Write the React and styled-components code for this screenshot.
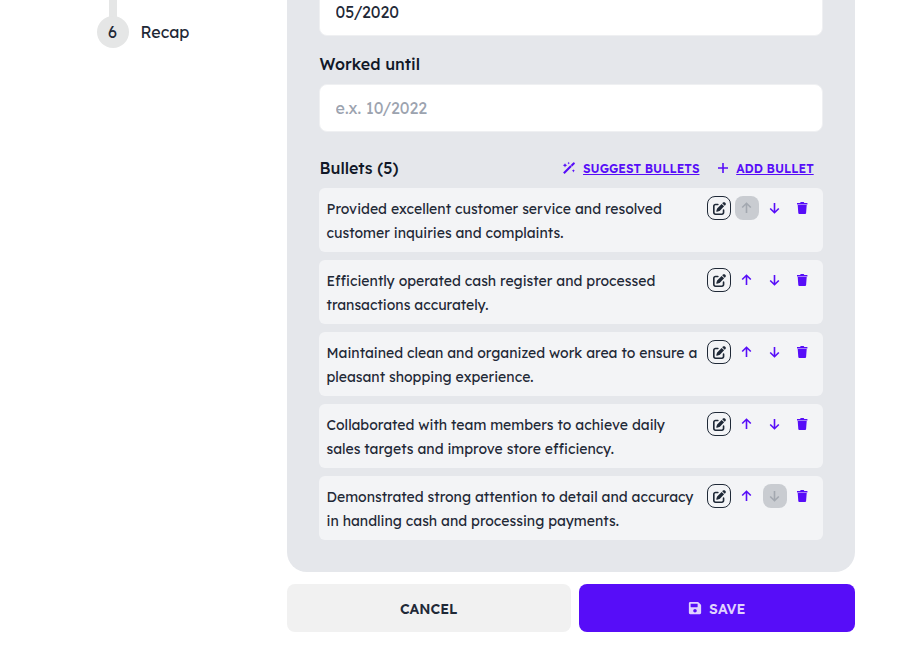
import React from "react";
import styled, { createGlobalStyle, css } from "styled-components";
import { FaSave } from "react-icons/fa";
import { FaPenToSquare } from "react-icons/fa6";

const GlobalStyle = createGlobalStyle`
  * { box-sizing: border-box; }
  body {
    margin: 0;
    height: 654px;
    overflow: hidden;
    background: #fff;
    color: #1f2937;
    font-family: Lexend, Inter, sans-serif;
    font-size: 16px;
    line-height: 24px;
  }
  button, input { font: inherit; }
`;

const Page = styled.div`
  display: flex;
  align-items: flex-start;
  height: 654px;
  overflow: hidden;
`;

const Steps = styled.aside`
  width: 287px;
  padding-left: 97px;
`;

const StepLine = styled.div`
  width: 8px;
  height: 18px;
  margin: 0 0 -2px 12px;
  background: #e5e6e6;
`;

const Step = styled.div`
  display: flex;
  align-items: center;
  gap: 11.5px;
`;

const StepNumber = styled.span`
  display: grid;
  place-items: center;
  width: 32px;
  height: 32px;
  padding-right: 1px;
  border-radius: 50%;
  background: #e5e6e6;
`;

const Main = styled.main`
  width: 568px;
`;

const Panel = styled.section`
  height: 572px;
  padding: 0 32px;
  border-radius: 0 0 20px 20px;
  background: #e5e7eb;
  overflow: hidden;
`;

const Input = styled.input`
  display: block;
  width: 504px;
  height: 48px;
  margin-top: ${(p) => p.$top}px;
  padding: 0 15.5px;
  border: 1px solid #eff0f2;
  border-radius: 8px;
  background: #fff;
  color: #1f2937;
  outline: none;
  &::placeholder { color: #9ca3af; opacity: 1; }
`;

const Label = styled.label`
  display: block;
  margin: 16px 0 8px 0.5px;
  color: #111827;
  font-weight: 500;
`;

const BulletsHeader = styled.div`
  display: flex;
  align-items: center;
  height: 24px;
  margin: 24px 0 8px 0.5px;
`;

const Title = styled.h3`
  margin: 0 auto 0 0;
  color: #111827;
  font-size: 16px;
  font-weight: 500;
`;

const LinkButton = styled.button`
  display: flex;
  align-items: center;
  gap: ${(p) => p.$gap}px;
  margin-right: ${(p) => p.$end}px;
  padding: 0;
  border: 0;
  background: none;
  color: #570df8;
  font-size: 12px;
  font-weight: 600;
  line-height: 12px;
  text-transform: uppercase;
`;

const LinkText = styled.span`
  padding-top: 2px;
  text-decoration: underline;
`;

const BulletList = styled.ul`
  display: grid;
  gap: 8px;
  margin: 0;
  padding: 0;
  list-style: none;
`;

const Bullet = styled.li`
  display: flex;
  justify-content: space-between;
  height: 64px;
  padding: 8px 8px 8px 7.5px;
  border-radius: 6px;
  background: #f3f4f6;
`;

const BulletText = styled.p`
  margin: 0;
  padding-top: 1px;
  width: 376px;
  font-size: 14px;
  line-height: 24px;
`;

const Actions = styled.div`
  display: flex;
  gap: 4px;
`;

const IconButton = styled.button`
  display: grid;
  place-items: center;
  width: 24px;
  height: 24px;
  padding: 0;
  border: 1px solid transparent;
  border-radius: 8px;
  background: none;
  color: #570df8;
  ${(p) => p.$outlined && css`border-color: #1f2937; color: #1f2937;`}
  &:disabled { background: #c9ccd1; color: #a3a8b0; }
`;

const Footer = styled.footer`
  display: flex;
  gap: 8px;
  margin-top: 12px;
`;

const FooterButton = styled.button`
  display: flex;
  align-items: center;
  justify-content: center;
  gap: 7px;
  width: ${(p) => (p.$primary ? 276 : 284)}px;
  height: 48px;
  padding: 2px 0.5px 0 0;
  border: 0;
  border-radius: 8px;
  background: ${(p) => (p.$primary ? "#570df8" : "#f1f1f1")};
  color: ${(p) => (p.$primary ? "#e0d2fe" : "#1f2937")};
  font-size: 14px;
  font-weight: 600;
  line-height: 14px;
  text-transform: uppercase;
  svg { margin-top: -2px; }
`;

const StrokeIcon = styled.svg.attrs({ fill: "none", stroke: "currentColor" })`
  display: block;
  stroke-width: 1.6;
`;

const ArrowIcon = ({ down }) => (
  <StrokeIcon width="14" height="14" viewBox="0 0 14 14">
    <path d={down ? "M6.5 2v9.5M2.2 7.5l4.3 4.2 4.3-4.2" : "M6.5 12V2.5M2.2 6.5l4.3-4.2 4.3 4.2"} />
  </StrokeIcon>
);

const TrashIcon = () => (
  <svg width="14" height="14" viewBox="0 0 14 14" fill="currentColor">
    <path d="M1 2h3.1l.6-.9h3l.6.9h3.1v1.4H1zM1.7 4h9l-.6 8.1a1 1 0 0 1-1 .9H3.3a1 1 0 0 1-1-.9z" />
  </svg>
);

const PlusIcon = () => (
  <StrokeIcon width="16" height="16" viewBox="0 0 16 16">
    <path d="M8 3v10M3 8h10" />
  </StrokeIcon>
);

const WandIcon = () => (
  <svg width="14" height="14" viewBox="0 0 14 14" fill="currentColor">
    <path d="M1.1 11.5L8.3 4.3l1.5 1.5L2.6 13zM8.7 3.9l2.5-2.5a.7.7 0 0 1 1 0l.5.5a.7.7 0 0 1 0 1l-2.5 2.5z" />
    <path d="M3 2.2l.7 1.4 1.5.7-1.5.7L3 6.4 2.3 5 .8 4.3l1.5-.7zM6.7.8l.4.9.9.4-.9.4-.4.9-.4-.9-.9-.4.9-.4zM11.4 8.2l.5 1.1 1.1.5-1.1.5-.5 1.1-.5-1.1-1.1-.5 1.1-.5z" />
  </svg>
);

const bullets = [
  "Provided excellent customer service and resolved customer inquiries and complaints.",
  "Efficiently operated cash register and processed transactions accurately.",
  "Maintained clean and organized work area to ensure a pleasant shopping experience.",
  "Collaborated with team members to achieve daily sales targets and improve store efficiency.",
  "Demonstrated strong attention to detail and accuracy in handling cash and processing payments.",
];

export default function App() {
  return (
    <>
      <GlobalStyle />
      <Page>
        <Steps>
          <StepLine />
          <Step>
            <StepNumber>6</StepNumber>
            Recap
          </Step>
        </Steps>
        <Main>
          <Panel>
            <Input $top={-12} defaultValue="05/2020" />
            <Label htmlFor="until">Worked until</Label>
            <Input $top={0} id="until" placeholder="e.x. 10/2022" />
            <BulletsHeader>
              <Title>Bullets (5)</Title>
              <LinkButton $gap={7} $end={15.7}>
                <WandIcon />
                <LinkText>Suggest bullets</LinkText>
              </LinkButton>
              <LinkButton $gap={5} $end={9.3}>
                <PlusIcon />
                <LinkText>Add bullet</LinkText>
              </LinkButton>
            </BulletsHeader>
            <BulletList>
              {bullets.map((text, i) => (
                <Bullet key={text}>
                  <BulletText>{text}</BulletText>
                  <Actions>
                    <IconButton $outlined aria-label="Edit"><FaPenToSquare size={13} /></IconButton>
                    <IconButton disabled={i === 0} aria-label="Move up"><ArrowIcon /></IconButton>
                    <IconButton disabled={i === bullets.length - 1} aria-label="Move down"><ArrowIcon down /></IconButton>
                    <IconButton aria-label="Delete"><TrashIcon /></IconButton>
                  </Actions>
                </Bullet>
              ))}
            </BulletList>
          </Panel>
          <Footer>
            <FooterButton>Cancel</FooterButton>
            <FooterButton $primary><FaSave size={14} />Save</FooterButton>
          </Footer>
        </Main>
      </Page>
    </>
  );
}
